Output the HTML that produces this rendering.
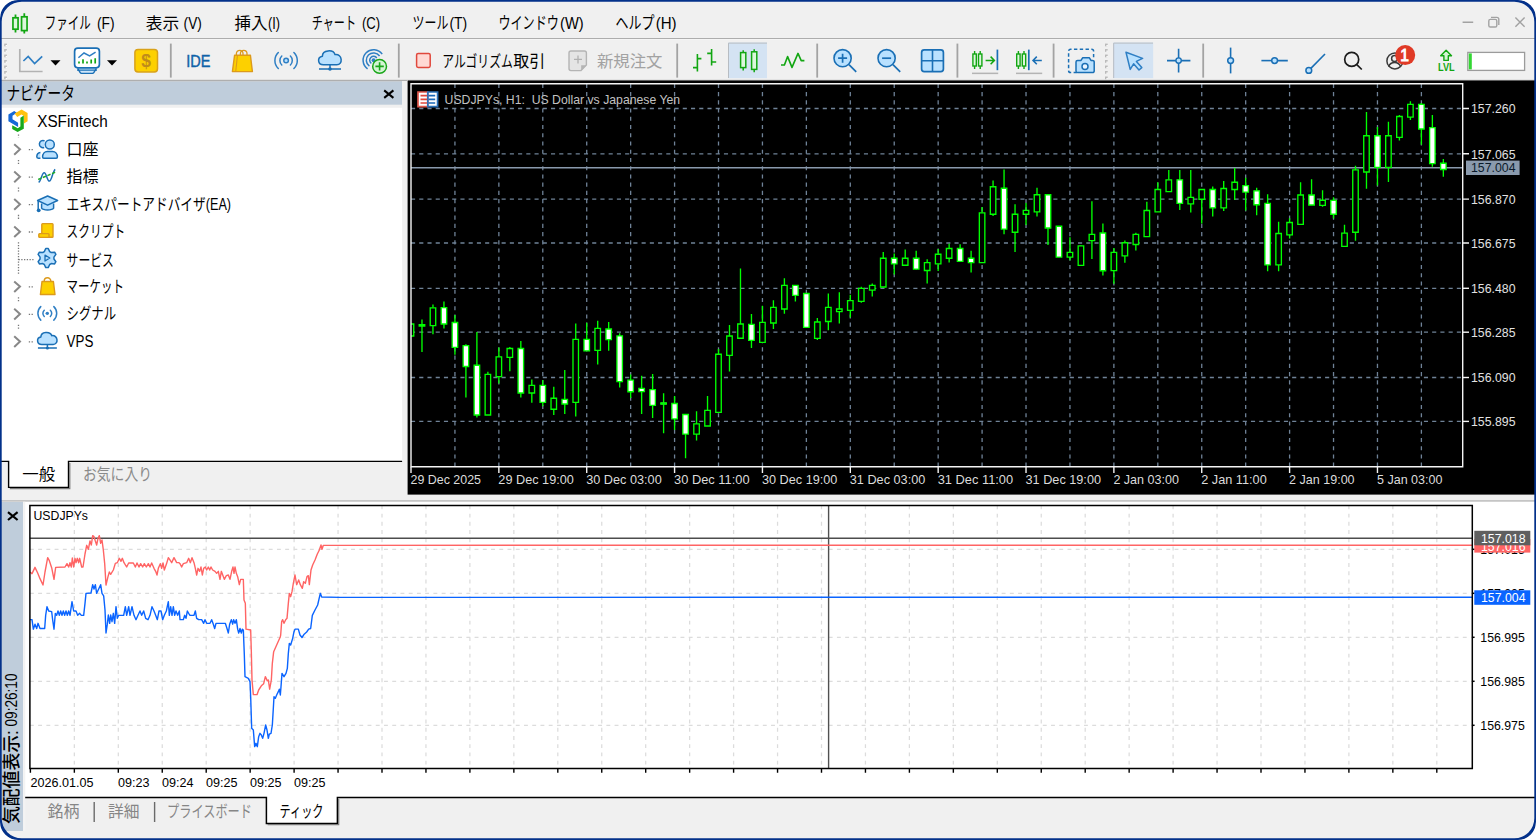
<!DOCTYPE html><html lang="ja"><head><meta charset="utf-8"><title>MetaTrader 5</title><style>

html,body{margin:0;padding:0;background:#fff}
body{width:1536px;height:840px;overflow:hidden;position:relative;font-family:"Liberation Sans","Noto Sans CJK JP",sans-serif}
#app{position:absolute;left:0;top:0;width:1536px;height:840px;border-radius:18px;overflow:hidden;background:#f0f0f0}
.panel{position:absolute;overflow:hidden}
svg text{font-family:"Liberation Sans","Noto Sans CJK JP",sans-serif;white-space:pre}
svg .lat{font-family:"Liberation Sans",sans-serif}

</style></head><body><div id="app">
<div class="panel" id="menubar" style="left:0px;top:0px;width:1536px;height:40px;background:#f0f0f0"><svg class="" width="1536" height="40" viewBox="0 0 1536 40" style="position:absolute;left:0;top:0;overflow:hidden"><rect x="0" y="38.1" width="1536" height="1.1" fill="#a6a6a6"/><rect x="0" y="39.2" width="1536" height="1" fill="#fbfbfb"/><path d="M15.5 14.6v3.2M15.5 29.2v3.2M24.3 13.2v3.6M24.3 30.6v3" stroke="#12a612" stroke-width="1.8" fill="none"/><rect x="12.95" y="17.8" width="5.1" height="11.4" fill="#dcf7dc" stroke="#12a612" stroke-width="1.7"/><rect x="21.55" y="16.8" width="5.5" height="13.8" fill="#dcf7dc" stroke="#12a612" stroke-width="1.7"/><text x="44.8" y="29.2" font-size="17" fill="#000" textLength="46" lengthAdjust="spacingAndGlyphs">ファイル</text><text x="97" y="28.6" font-size="16" fill="#000" textLength="17.6" lengthAdjust="spacingAndGlyphs" class="lat">(F)</text><text x="145.8" y="29.2" font-size="16.4" fill="#000" textLength="33.5" lengthAdjust="spacingAndGlyphs">表示</text><text x="183.6" y="28.6" font-size="16" fill="#000" textLength="18.2" lengthAdjust="spacingAndGlyphs" class="lat">(V)</text><text x="234.4" y="29.2" font-size="16.4" fill="#000" textLength="33" lengthAdjust="spacingAndGlyphs">挿入</text><text x="268" y="28.6" font-size="16" fill="#000" textLength="12" lengthAdjust="spacingAndGlyphs" class="lat">(I)</text><text x="311.8" y="29.2" font-size="17" fill="#000" textLength="44.2" lengthAdjust="spacingAndGlyphs">チャート</text><text x="362" y="28.6" font-size="16" fill="#000" textLength="18.2" lengthAdjust="spacingAndGlyphs" class="lat">(C)</text><text x="412.6" y="29.2" font-size="17" fill="#000" textLength="35.8" lengthAdjust="spacingAndGlyphs">ツール</text><text x="449.5" y="28.6" font-size="16" fill="#000" textLength="17.7" lengthAdjust="spacingAndGlyphs" class="lat">(T)</text><text x="498.4" y="29.2" font-size="17" fill="#000" textLength="60.5" lengthAdjust="spacingAndGlyphs">ウインドウ</text><text x="560" y="28.6" font-size="16" fill="#000" textLength="23.6" lengthAdjust="spacingAndGlyphs" class="lat">(W)</text><text x="615.6" y="29.2" font-size="17" fill="#000" textLength="39" lengthAdjust="spacingAndGlyphs">ヘルプ</text><text x="655.7" y="28.6" font-size="16" fill="#000" textLength="20.9" lengthAdjust="spacingAndGlyphs" class="lat">(H)</text><path d="M1462.6 22.2h10.6" stroke="#a2a2a2" stroke-width="1.5" fill="none"/><rect x="1488.8" y="19.4" width="8" height="7.6" rx="1.6" fill="none" stroke="#a2a2a2" stroke-width="1.4"/><path d="M1491 17.4h5.8a2 2 0 0 1 2 2v5.6" fill="none" stroke="#a2a2a2" stroke-width="1.4"/><path d="M1515.4 17.6l9.2 9.2M1524.6 17.6l-9.2 9.2" stroke="#a2a2a2" stroke-width="1.4" fill="none"/></svg></div>
<div class="panel" id="toolbar" style="left:0px;top:40px;width:1536px;height:41px;background:#f0f0f0"><svg class="" width="1536" height="41" viewBox="0 40 1536 41" style="position:absolute;left:0;top:0;overflow:hidden"><rect x="0" y="79.3" width="1536" height="0.9" fill="#dcdcdc"/><rect x="0" y="80.1" width="1536" height="1" fill="#a8a8a8"/><rect x="4.2" y="43.6" width="2.7" height="2.7" fill="#b9b9b9"/><rect x="5.6" y="45" width="1.4" height="1.4" fill="#fff"/><rect x="4.2" y="49.09" width="2.7" height="2.7" fill="#b9b9b9"/><rect x="5.6" y="50.49" width="1.4" height="1.4" fill="#fff"/><rect x="4.2" y="54.58" width="2.7" height="2.7" fill="#b9b9b9"/><rect x="5.6" y="55.98" width="1.4" height="1.4" fill="#fff"/><rect x="4.2" y="60.07" width="2.7" height="2.7" fill="#b9b9b9"/><rect x="5.6" y="61.47" width="1.4" height="1.4" fill="#fff"/><rect x="4.2" y="65.56" width="2.7" height="2.7" fill="#b9b9b9"/><rect x="5.6" y="66.96" width="1.4" height="1.4" fill="#fff"/><rect x="4.2" y="71.05" width="2.7" height="2.7" fill="#b9b9b9"/><rect x="5.6" y="72.45" width="1.4" height="1.4" fill="#fff"/><rect x="4.2" y="76.54" width="2.7" height="2.7" fill="#b9b9b9"/><rect x="5.6" y="77.94" width="1.4" height="1.4" fill="#fff"/><path d="M19.8 49v22.5h22.8" fill="none" stroke="#b2b2b2" stroke-width="1.7"/><path d="M23.4 61l4.8-4.6 6.4 7.2 7.6-7.2" fill="none" stroke="#2f7fc4" stroke-width="1.7"/><path d="M50.5 60.2h10l-5 5.4z" fill="#000"/><path d="M77.6 68.4l2.6 4.2a1.6 1.6 0 0 0 1.4 .8h10.8a1.6 1.6 0 0 0 1.4-.8l2.6-4.2" fill="#cfe6fa" stroke="#1a6fb5" stroke-width="1.4"/><path d="M77 70.2h20" stroke="#1a6fb5" stroke-width="1.3"/><rect x="74.6" y="48.2" width="24.8" height="19.6" fill="#fff" stroke="#1a6fb5" stroke-width="1.7" rx="3.2"/><path d="M78.4 57.8l5.6-4.8 5.6 3 6-3.8" fill="none" stroke="#2f7fc4" stroke-width="1.5"/><path d="M79 63.6v-2.2M83 63.6v-4.4M87 63.6v-2.2M91.2 63.6v-4M95.2 63.6v-5.4" stroke="#12a612" stroke-width="1.7" fill="none"/><path d="M107 60.2h10l-5 5.4z" fill="#000"/><rect x="134.9" y="49.4" width="22.6" height="22.6" fill="#fdd000" stroke="#d9a21a" stroke-width="1.5" rx="3.2"/><text x="146.2" y="66.6" font-size="17.5" fill="#c08c1a" text-anchor="middle" class="lat" font-weight="bold">$</text><rect x="169.9" y="43.6" width="1.8" height="34" fill="#a3a3a3"/><text x="186.2" y="66.8" font-size="17.2" fill="#0f62a8" textLength="24.2" lengthAdjust="spacingAndGlyphs" class="lat" stroke="#0f62a8" stroke-width="0.45">IDE</text><path d="M236.4 56v-2.4a3.3 3.3 0 0 1 6.6 0v2.4M240.4 56v-2.4a3.3 3.3 0 0 1 6.6 0v2.4" fill="none" stroke="#dc9a1c" stroke-width="1.3"/><path d="M234.6 55.2h15.8l2 16.4h-20z" fill="#fdd000" stroke="#dc9a1c" stroke-width="1.4" stroke-linejoin="round"/><path d="M235.8 71l1.6-15.4" stroke="#dc9a1c" stroke-width="1.1" fill="none"/><path d="M290.41 56.04A6.2 6.2 0 0 1 290.41 64.96M281.79 56.04A6.2 6.2 0 0 0 281.79 64.96" fill="none" stroke="#2f7fc4" stroke-width="1.5" stroke-linecap="round"/><path d="M293.88 52.44A11.2 11.2 0 0 1 293.88 68.56M278.32 52.44A11.2 11.2 0 0 0 278.32 68.56" fill="none" stroke="#2f7fc4" stroke-width="1.5" stroke-linecap="round"/><circle cx="286.1" cy="60.5" r="2.3" fill="#b9e1ff" stroke="#2f7fc4" stroke-width="1.5"/><path d="M323.4 64.8C317.6 64.8 316.8 57.2 322.4 56.2C322.4 49.6 333.4 49.2 335 54.6C342.6 53.6 343.2 64.8 336.8 64.8z" fill="#b9e1ff" stroke="#1a6fb5" stroke-width="1.5" stroke-linejoin="round"/><path d="M330 64.8v3.4M319 69h22" stroke="#1a6fb5" stroke-width="1.5" fill="none"/><circle cx="330" cy="69" r="1.8" fill="#1a6fb5"/><path d="M376.79 57.96A3.9 3.9 0 1 0 371.36 63.39" fill="none" stroke="#2f7fc4" stroke-width="1.5"/><path d="M379.58 56.01A7.3 7.3 0 1 0 369.41 66.18" fill="none" stroke="#2f7fc4" stroke-width="1.5"/><path d="M382.2 54.18A10.5 10.5 0 1 0 367.58 68.8" fill="none" stroke="#2f7fc4" stroke-width="1.5"/><circle cx="373.6" cy="60.2" r="2" fill="#2f7fc4"/><circle cx="379.6" cy="66.4" r="6.9" fill="#d4f4d4" stroke="#1aa61a" stroke-width="1.5"/><path d="M375.4 66.4h8.4M379.6 62.2v8.4" stroke="#1aa61a" stroke-width="1.6" fill="none"/><rect x="397.9" y="43.6" width="1.8" height="34" fill="#a3a3a3"/><rect x="416.6" y="53.4" width="13.6" height="14" fill="#ffd9d4" stroke="#e0483c" stroke-width="1.5" rx="1.6"/><text x="442.3" y="66.6" font-size="16.4" fill="#000" textLength="70.5" lengthAdjust="spacingAndGlyphs">アルゴリズム</text><text x="513.2" y="66.6" font-size="16.4" fill="#000" textLength="32" lengthAdjust="spacingAndGlyphs">取引</text><path d="M571 51h13.4a2 2 0 0 1 2 2v12l-5.4 5.6h-10a2 2 0 0 1 -2-2v-15.6a2 2 0 0 1 2-2z" fill="#e4e4e4" stroke="#b4b4b4" stroke-width="1.4"/><path d="M586.2 65.2h-5v5.2z" fill="#b4b4b4"/><path d="M574 59.4h8M578 55.4v8" stroke="#b0b0b0" stroke-width="1.3" fill="none"/><text x="597" y="66.6" font-size="16.4" fill="#a2a2a2" textLength="65.5" lengthAdjust="spacingAndGlyphs">新規注文</text><rect x="676.3" y="43.6" width="1.8" height="34" fill="#a3a3a3"/><path d="M697.4 54v17.6M693 67.6h4.4M697.4 58.6h4M711.6 49v16.4M707.2 53.4h4.4M711.6 62h4.6" fill="none" stroke="#12a612" stroke-width="1.6"/><rect x="728" y="42.6" width="39" height="35.6" fill="#d4e3f3"/><path d="M728.5 78V43.1H767" fill="none" stroke="#b7bcc2" stroke-width="1"/><path d="M743.2 50.2V52.6M743.2 67.6V70.6" stroke="#12a612" stroke-width="1.5" fill="none"/><rect x="740.6" y="52.6" width="5.2" height="15" fill="#dcf7dc" stroke="#12a612" stroke-width="1.5"/><path d="M754.2 49.2V51.8M754.2 69.4V72.2" stroke="#12a612" stroke-width="1.5" fill="none"/><rect x="751.6" y="51.8" width="5.2" height="17.6" fill="#dcf7dc" stroke="#12a612" stroke-width="1.5"/><path d="M781 65h3.4l3.2-8.4 4.4 10.8 6-14 3.2 7.2h3.2" fill="none" stroke="#12a612" stroke-width="1.6" stroke-linejoin="round"/><rect x="816.3" y="43.6" width="1.8" height="34" fill="#a3a3a3"/><circle cx="842.6" cy="58.2" r="8.6" fill="#b9e1ff" stroke="#1a6fb5" stroke-width="1.6"/><path d="M849 64.6l7.2 7.2" stroke="#1a6fb5" stroke-width="1.7" fill="none"/><path d="M838.1 58.2h9M842.6 53.7v9" stroke="#1a6fb5" stroke-width="1.7" fill="none"/><circle cx="886.6" cy="58.2" r="8.6" fill="#b9e1ff" stroke="#1a6fb5" stroke-width="1.6"/><path d="M893 64.6l7.2 7.2" stroke="#1a6fb5" stroke-width="1.7" fill="none"/><path d="M882.1 58.2h9" stroke="#1a6fb5" stroke-width="1.7" fill="none"/><rect x="921.6" y="49.8" width="21.8" height="21.8" fill="#b9e1ff" stroke="#1a6fb5" stroke-width="1.7" rx="2.6"/><path d="M932.5 49.8v21.8M921.6 60.7h21.8" stroke="#1a6fb5" stroke-width="1.6" fill="none"/><rect x="956.5" y="43.6" width="1.8" height="34" fill="#a3a3a3"/><path d="M974.6 51V54M974.6 66V69" stroke="#12a612" stroke-width="1.4" fill="none"/><rect x="972.9" y="54" width="3.4" height="12" fill="#dcf7dc" stroke="#12a612" stroke-width="1.4"/><path d="M980.2 51V54M980.2 66V69" stroke="#12a612" stroke-width="1.4" fill="none"/><rect x="978.5" y="54" width="3.4" height="12" fill="#dcf7dc" stroke="#12a612" stroke-width="1.4"/><path d="M985.6 60.4h8.6M990.6 56.6l3.8 3.8-3.8 3.8" fill="none" stroke="#12a612" stroke-width="1.5"/><path d="M997.4 49.6v20.6" stroke="#1a6fb5" stroke-width="1.7"/><rect x="972" y="72.6" width="26.2" height="1.5" fill="#b4b4b4"/><path d="M1018.4 51V54M1018.4 66V69" stroke="#12a612" stroke-width="1.4" fill="none"/><rect x="1016.7" y="54" width="3.4" height="12" fill="#dcf7dc" stroke="#12a612" stroke-width="1.4"/><path d="M1024 51V54M1024 66V69" stroke="#12a612" stroke-width="1.4" fill="none"/><rect x="1022.3" y="54" width="3.4" height="12" fill="#dcf7dc" stroke="#12a612" stroke-width="1.4"/><path d="M1028.8 49.6v20.6" stroke="#1a6fb5" stroke-width="1.7"/><path d="M1033 60.4h8.8M1036.8 56.6l-3.8 3.8 3.8 3.8" fill="none" stroke="#1a6fb5" stroke-width="1.5"/><rect x="1016" y="72.6" width="26.2" height="1.5" fill="#b4b4b4"/><rect x="1052.7" y="43.6" width="1.8" height="34" fill="#a3a3a3"/><path d="M1077 72.6h-6.4a2 2 0 0 1 -2-2v-19.4a2 2 0 0 1 2-2h21a2 2 0 0 1 2 2v6" fill="none" stroke="#1a6fb5" stroke-width="1.5" stroke-dasharray="3.4 2.4"/><path d="M1077.6 60.4h3.4l1.6-2.6h6.8l1.6 2.6h1.6a1.6 1.6 0 0 1 1.6 1.6v9a1.6 1.6 0 0 1 -1.6 1.6h-15a1.6 1.6 0 0 1 -1.6-1.6v-9a1.6 1.6 0 0 1 1.6-1.6z" fill="#b9e1ff" stroke="#1a6fb5" stroke-width="1.5" stroke-linejoin="round"/><circle cx="1085" cy="66.4" r="3" fill="#eaf5ff" stroke="#1a6fb5" stroke-width="1.5"/><rect x="1105" y="43.6" width="2.7" height="2.7" fill="#b9b9b9"/><rect x="1106.4" y="45" width="1.4" height="1.4" fill="#fff"/><rect x="1105" y="49.09" width="2.7" height="2.7" fill="#b9b9b9"/><rect x="1106.4" y="50.49" width="1.4" height="1.4" fill="#fff"/><rect x="1105" y="54.58" width="2.7" height="2.7" fill="#b9b9b9"/><rect x="1106.4" y="55.98" width="1.4" height="1.4" fill="#fff"/><rect x="1105" y="60.07" width="2.7" height="2.7" fill="#b9b9b9"/><rect x="1106.4" y="61.47" width="1.4" height="1.4" fill="#fff"/><rect x="1105" y="65.56" width="2.7" height="2.7" fill="#b9b9b9"/><rect x="1106.4" y="66.96" width="1.4" height="1.4" fill="#fff"/><rect x="1105" y="71.05" width="2.7" height="2.7" fill="#b9b9b9"/><rect x="1106.4" y="72.45" width="1.4" height="1.4" fill="#fff"/><rect x="1105" y="76.54" width="2.7" height="2.7" fill="#b9b9b9"/><rect x="1106.4" y="77.94" width="1.4" height="1.4" fill="#fff"/><rect x="1113.2" y="42.6" width="40" height="35.6" fill="#d4e3f3"/><path d="M1113.7 78V43.1H1153" fill="none" stroke="#b7bcc2" stroke-width="1"/><path d="M1126 52.2l16.6 6.2-6.2 3 5.4 6.2-2.8 2.4-5.4-6.2-3.4 5.6z" fill="#b9e1ff" stroke="#2f7fc4" stroke-width="1.5" stroke-linejoin="round"/><path d="M1167 60.6h23.4M1178.6 48.8v23.6" stroke="#1a6fb5" stroke-width="1.6" fill="none"/><circle cx="1178.6" cy="60.6" r="2.7" fill="#b9e1ff" stroke="#1a6fb5" stroke-width="1.4"/><rect x="1202.3" y="43.6" width="1.8" height="34" fill="#a3a3a3"/><path d="M1230.6 47.6v25.8" stroke="#1a6fb5" stroke-width="1.6"/><circle cx="1230.6" cy="60.6" r="2.9" fill="#b9e1ff" stroke="#1a6fb5" stroke-width="1.5"/><path d="M1261.4 60.6h26.4" stroke="#1a6fb5" stroke-width="1.6"/><circle cx="1274.6" cy="60.6" r="2.9" fill="#b9e1ff" stroke="#1a6fb5" stroke-width="1.5"/><path d="M1310.6 68.6l14.4-14.6" stroke="#1a6fb5" stroke-width="1.6"/><circle cx="1308.8" cy="70.4" r="2.9" fill="#b9e1ff" stroke="#1a6fb5" stroke-width="1.5"/><circle cx="1351.7" cy="59.4" r="7" fill="none" stroke="#1c1c1c" stroke-width="1.7"/><path d="M1356.8 64.6l5 4.9" stroke="#1c1c1c" stroke-width="1.7" fill="none"/><circle cx="1394.9" cy="60.9" r="8" fill="none" stroke="#3a3a3a" stroke-width="1.5"/><circle cx="1394.6" cy="58.4" r="3" fill="none" stroke="#3a3a3a" stroke-width="1.5"/><path d="M1388.6 66.6c1.2-3 3.4-4 6-4s4.8 1 6 4" fill="none" stroke="#3a3a3a" stroke-width="1.5"/><circle cx="1405.2" cy="55.1" r="10" fill="#e03a26"/><text x="1404.6" y="60.7" font-size="15.6" fill="#fff" text-anchor="middle" class="lat" stroke="#fff" stroke-width="0.9">1</text><path d="M1446.1 50.2l5.4 5.6h-3.2v4.6h-4.4v-4.6h-3.2z" fill="#d4f4d4" stroke="#12a612" stroke-width="1.4" stroke-linejoin="round"/><text x="1438" y="70.9" font-size="11" fill="#12a612" textLength="16.7" lengthAdjust="spacingAndGlyphs" class="lat" font-weight="bold">LVL</text><rect x="1467.8" y="52.4" width="56.8" height="18" fill="#fff" stroke="#9b9b9b" stroke-width="1.3"/><rect x="1468.8" y="53.4" width="3" height="16" fill="#33d633"/></svg></div>
<div class="panel" id="navigator" style="left:0px;top:81px;width:407px;height:420px;background:#f0f0f0"><svg class="" width="407" height="420" viewBox="0 81 407 420" style="position:absolute;left:0;top:0;overflow:hidden"><rect x="0" y="80.6" width="402" height="1" fill="#b5b5b5"/><rect x="0" y="81.5" width="402" height="23.2" fill="#bfcddb"/><text x="6.4" y="99.6" font-size="18.4" fill="#000" textLength="68.5" lengthAdjust="spacingAndGlyphs">ナビゲータ</text><path d="M384.2 90.4l9.2 7.5M393.4 90.4l-9.2 7.5" stroke="#000" stroke-width="2" fill="none"/><rect x="0" y="107.8" width="402.1" height="353.6" fill="#fff"/><path d="M18.5 134.5V137.5" stroke="#777" stroke-width="1.3" stroke-dasharray="1.3 1.45" fill="none"/><path d="M18.5 159.95V164.95" stroke="#777" stroke-width="1.3" stroke-dasharray="1.3 1.45" fill="none"/><path d="M18.5 187.4V192.4" stroke="#777" stroke-width="1.3" stroke-dasharray="1.3 1.45" fill="none"/><path d="M18.5 214.85V219.85" stroke="#777" stroke-width="1.3" stroke-dasharray="1.3 1.45" fill="none"/><path d="M18.5 242.3V273.75" stroke="#777" stroke-width="1.3" stroke-dasharray="1.3 1.45" fill="none"/><path d="M18.5 297.2V302.2" stroke="#777" stroke-width="1.3" stroke-dasharray="1.3 1.45" fill="none"/><path d="M18.5 324.65V329.65" stroke="#777" stroke-width="1.3" stroke-dasharray="1.3 1.45" fill="none"/><path d="M14.2 144.15l5.8 5.2l-5.8 5.4" fill="none" stroke="#888" stroke-width="2"/><path d="M28.8 149.65H33" stroke="#777" stroke-width="1.3" stroke-dasharray="1.3 1.45" fill="none"/><path d="M14.2 171.6l5.8 5.2l-5.8 5.4" fill="none" stroke="#888" stroke-width="2"/><path d="M28.8 177.1H33" stroke="#777" stroke-width="1.3" stroke-dasharray="1.3 1.45" fill="none"/><path d="M14.2 199.05l5.8 5.2l-5.8 5.4" fill="none" stroke="#888" stroke-width="2"/><path d="M28.8 204.55H33" stroke="#777" stroke-width="1.3" stroke-dasharray="1.3 1.45" fill="none"/><path d="M14.2 226.5l5.8 5.2l-5.8 5.4" fill="none" stroke="#888" stroke-width="2"/><path d="M28.8 232H33" stroke="#777" stroke-width="1.3" stroke-dasharray="1.3 1.45" fill="none"/><path d="M14.2 281.4l5.8 5.2l-5.8 5.4" fill="none" stroke="#888" stroke-width="2"/><path d="M28.8 286.9H33" stroke="#777" stroke-width="1.3" stroke-dasharray="1.3 1.45" fill="none"/><path d="M14.2 308.85l5.8 5.2l-5.8 5.4" fill="none" stroke="#888" stroke-width="2"/><path d="M28.8 314.35H33" stroke="#777" stroke-width="1.3" stroke-dasharray="1.3 1.45" fill="none"/><path d="M14.2 336.3l5.8 5.2l-5.8 5.4" fill="none" stroke="#888" stroke-width="2"/><path d="M28.8 341.8H33" stroke="#777" stroke-width="1.3" stroke-dasharray="1.3 1.45" fill="none"/><path d="M18.5 259.55H33.5" stroke="#777" stroke-width="1.3" stroke-dasharray="1.3 1.45" fill="none"/><path d="M8.4 114.6l5.8-3.7 2.6 1.8-4.3 3v3.6l5.6 3.4v4.4l-9.7-5.8z" fill="#1668d6"/><path d="M14.6 113.4l7-3.8 6 3.4v8.2l-3.6 2.2v-7.4l-2.6-1.6-4.2 2.6z" fill="#ffc20e"/><path d="M12.2 125.3l5.6 3 2.6-1.8v-8.8l3.4-2.2v13.2l-6.2 3.4-5.4-3z" fill="#18a81c"/><text x="37.2" y="127" font-size="16" fill="#000" textLength="70.5" lengthAdjust="spacingAndGlyphs" class="lat">XSFintech</text><path d="M44.6 140.85a3.6 3.6 0 1 0 -0.4 6.6M40.4 158.25h-2.2a1.4 1.4 0 0 1 -1.4-1.4c0-2.6 1.4-4.2 3.6-4.4" fill="#b9e1ff" stroke="#1a6fb5" stroke-width="1.5"/><circle cx="49.8" cy="144.45" r="4.5" fill="#b9e1ff" stroke="#1a6fb5" stroke-width="1.5"/><path d="M42.6 157.05c0-3.6 2.2-5.6 4.6-5.6h5.4c2.6 0 4.8 2 4.8 5.6a1.2 1.2 0 0 1 -1.2 1.2h-12.4a1.2 1.2 0 0 1 -1.2-1.2z" fill="#b9e1ff" stroke="#1a6fb5" stroke-width="1.5"/><text x="66.6" y="154.75" font-size="16.4" fill="#000" textLength="32" lengthAdjust="spacingAndGlyphs">口座</text><path d="M38.6 182.3c2.4-1 3.2-9.6 5.6-9.6s2.8 8.4 5.2 8.4 3.2-9.8 5.8-11.8" fill="none" stroke="#1a6fb5" stroke-width="1.5"/><path d="M38.2 179.5L55.6 172.1" fill="none" stroke="#1eaa28" stroke-width="1.5" stroke-dasharray="3.4 1.6"/><text x="66.6" y="182.2" font-size="16.4" fill="#000" textLength="32" lengthAdjust="spacingAndGlyphs">指標</text><path d="M41.6 203.55v4.6c1.6 2.4 10.4 2.4 12 0v-4.6" fill="#b9e1ff" stroke="#1a6fb5" stroke-width="1.5"/><path d="M37.6 200.55l10-4.5 10 4.5-10 4.6z" fill="#b9e1ff" stroke="#1a6fb5" stroke-width="1.5" stroke-linejoin="round"/><path d="M38.2 200.75v8.2" stroke="#1a6fb5" stroke-width="1.5"/><circle cx="38.7" cy="210.35" r="1.9" fill="#1a6fb5"/><text x="66.6" y="209.65" font-size="16.4" fill="#000" textLength="164.5" lengthAdjust="spacingAndGlyphs">エキスパートアドバイザ(EA)</text><rect x="41.8" y="223.6" width="11.2" height="13.6" fill="#fdd000" stroke="#dc9a1c" stroke-width="1.4" rx="0.8"/><rect x="38.8" y="233.6" width="10.2" height="3.8" fill="#fdd000" stroke="#dc9a1c" stroke-width="1.4" rx="0.8"/><text x="66.6" y="237.1" font-size="16.4" fill="#000" textLength="58.5" lengthAdjust="spacingAndGlyphs">スクリプト</text><path d="M45.75 248.53L48.25 248.53L49.68 251.58L51.26 252.5L54.62 252.21L55.87 254.38L53.94 257.14L53.94 258.96L55.87 261.72L54.62 263.89L51.26 263.6L49.68 264.52L48.25 267.57L45.75 267.57L44.32 264.52L42.74 263.6L39.38 263.89L38.13 261.72L40.06 258.96L40.06 257.14L38.13 254.38L39.38 252.21L42.74 252.5L44.32 251.58z" fill="#b9e1ff" stroke="#1a6fb5" stroke-width="1.5" stroke-linejoin="round"/><path d="M45 255.05l4.8 3-4.8 3z" fill="#b9e1ff" stroke="#1a6fb5" stroke-width="1.3" stroke-linejoin="round"/><text x="66.6" y="265.85" font-size="16.4" fill="#000" textLength="47.3" lengthAdjust="spacingAndGlyphs">サービス</text><path d="M44.2 283.7v-2.6a3.3 3.3 0 0 1 6.6 0v2.6" fill="none" stroke="#dc9a1c" stroke-width="1.4"/><path d="M42 281.5h11.4l1.6 13h-14.6z" fill="#fdd000" stroke="#dc9a1c" stroke-width="1.4" stroke-linejoin="round"/><text x="66.6" y="292" font-size="16.4" fill="#000" textLength="57.3" lengthAdjust="spacingAndGlyphs">マーケット</text><path d="M50.36 310.18A4.4 4.4 0 0 1 50.36 316.52M44.24 310.18A4.4 4.4 0 0 0 44.24 316.52" fill="none" stroke="#2f7fc4" stroke-width="1.5" stroke-linecap="round"/><path d="M53.83 306.59A9.4 9.4 0 0 1 53.83 320.11M40.77 306.59A9.4 9.4 0 0 0 40.77 320.11" fill="none" stroke="#2f7fc4" stroke-width="1.5" stroke-linecap="round"/><circle cx="47.3" cy="313.35" r="1.7" fill="#2f7fc4"/><text x="66.6" y="319.45" font-size="16.4" fill="#000" textLength="49.5" lengthAdjust="spacingAndGlyphs">シグナル</text><path d="M41.72 344.42C36.74 344.42 36.05 337.88 40.86 337.02C40.86 331.35 50.32 331 51.7 335.65C58.24 334.79 58.75 344.42 53.25 344.42z" fill="#b9e1ff" stroke="#1a6fb5" stroke-width="1.5" stroke-linejoin="round"/><path d="M47.4 344.42v2.92M37.94 348.03h18.92" stroke="#1a6fb5" stroke-width="1.5" fill="none"/><circle cx="47.4" cy="348.03" r="1.55" fill="#1a6fb5"/><text x="66.6" y="346.8" font-size="16" fill="#000" textLength="26.8" lengthAdjust="spacingAndGlyphs" class="lat">VPS</text><rect x="8.6" y="461" width="60" height="26.4" fill="#fff"/><path d="M0 461.4H8.6V487.4H68.5V461.4H402.1" fill="none" stroke="#000" stroke-width="1.4"/><path d="M9.8 488.7H69.8V463" fill="none" stroke="#7a7a7a" stroke-width="1.2"/><text x="22.3" y="480.3" font-size="16.4" fill="#000" textLength="33" lengthAdjust="spacingAndGlyphs">一般</text><text x="83" y="480.3" font-size="16.4" fill="#8a8a8a" textLength="69" lengthAdjust="spacingAndGlyphs">お気に入り</text></svg></div>
<div class="panel" id="chart" style="left:407px;top:80px;width:1129px;height:415px;background:#f0f0f0"><svg class="" width="1129" height="415" viewBox="407 80 1129 415" style="position:absolute;left:0;top:0;overflow:hidden"><rect x="407.6" y="80.4" width="1128.4" height="414.2" fill="#000"/><path d="M454.93 83.8V466.8M498.86 83.8V466.8M542.79 83.8V466.8M586.72 83.8V466.8M630.65 83.8V466.8M674.58 83.8V466.8M718.51 83.8V466.8M762.44 83.8V466.8M806.37 83.8V466.8M850.3 83.8V466.8M894.23 83.8V466.8M938.16 83.8V466.8M982.09 83.8V466.8M1026.02 83.8V466.8M1069.95 83.8V466.8M1113.88 83.8V466.8M1157.81 83.8V466.8M1201.74 83.8V466.8M1245.67 83.8V466.8M1289.6 83.8V466.8M1333.53 83.8V466.8M1377.46 83.8V466.8M1421.39 83.8V466.8M411 108.5H1462.7M411 153.8H1462.7M411 199.1H1462.7M411 243H1462.7M411 288.3H1462.7M411 332.2H1462.7M411 377.5H1462.7M411 421.4H1462.7" fill="none" stroke="#6f8297" stroke-width="1.3" stroke-dasharray="4.1175 4.1175"/><line x1="411" y1="167.7" x2="1462.7" y2="167.7" stroke="#8a9aad" stroke-width="1.4"/><clipPath id="cc"><rect x="411" y="83.8" width="1051.7" height="383"/></clipPath><g clip-path="url(#cc)" stroke="#00ff00" stroke-width="1.35" fill="none"><path d="M421.98 319.4V324.6M421.98 326V352M432.96 304.5V307.8M432.96 325.6V334.3M443.95 301.6V307.6M443.95 324V328.6M454.93 315V322.5M454.93 347.4V354.7M465.91 344.3V345.6M465.91 366.5V397.4M476.89 332V365.2M476.89 415V417.6M487.88 371.8V374.4M498.86 347.4V356.8M498.86 376.7V383.5M509.84 346.9V348.5M509.84 357.4V371.2M520.83 341.1V348.5M520.83 393V397.4M531.81 379.6V385.4M531.81 393V402.7M542.79 380.1V385.4M542.79 402.4V406.3M553.77 386.7V398.2M553.77 409.2V415M564.75 370V399.3M564.75 404V414M575.74 323.6V339.3M575.74 402.4V416.5M586.72 322.8V339.3M597.7 320.7V328.3M597.7 350.3V364.4M608.68 322V329M608.68 339.6V350.8M619.67 333.3V335.9M619.67 381.7V387.5M630.65 374.4V380.1M630.65 391.7V398M641.63 375.7V388.3M641.63 391.7V414M652.62 374.1V389.6M652.62 405.3V418.1M663.6 393.2V402.8M663.6 404.2V433.3M674.58 396.1V403.5M674.58 418.9V429.9M685.56 434.1V458.2M696.55 411.3V423.9M696.55 434.1V440.4M707.53 396.1V410.3M718.51 349V354.2M729.49 325V336M729.49 355.4V371.4M740.48 268.6V324M751.46 314V324.3M751.46 340.4V348M762.44 305.7V322.3M773.42 300.2V307.4M773.42 323V328.9M784.4 278.3V285.4M784.4 309V313.7M795.39 295.3V301.4M817.35 318.1V322M817.35 338.3V339.9M828.34 293.5V307.4M828.34 321.5V330.2M839.32 292.2V309M839.32 311.6V323.4M850.3 294.8V300.6M850.3 310.3V317.6M861.28 286.7V288.3M861.28 301.4V302.7M872.26 283.6V285.4M872.26 290.1V296.6M883.25 252.1V258.2M883.25 287V287.5M894.23 253.4V258.2M894.23 263.9V274.4M905.21 249.5V258.2M916.19 250.8V258.2M916.19 269.1V269.7M927.18 259.2V262.6M927.18 270.5V283.6M938.16 249V254.2M938.16 263.9V271M949.14 243.7V248.5M949.14 258.2V262.6M960.12 244.3V248.5M971.11 250.8V258.2M971.11 262.6V272.6M982.09 207.1V212.8M982.09 262.6V263.1M993.07 180.6V186.7M993.07 214.2V216M1004.05 169.6V188.2M1004.05 229.1V234.3M1015.04 204.2V214.2M1015.04 232.2V252.1M1026.02 203.1V210.4M1026.02 214.3V225M1037 187.7V194.7M1037 211.8V216.5M1047.99 228V245M1069.95 237.2V252.4M1069.95 257.1V260.2M1080.93 245V245.8M1091.91 201.3V234.3M1091.91 240.6V258.9M1102.9 223.6V233M1102.9 270.7V275.4M1113.88 247.9V252.4M1113.88 270.7V283.8M1124.86 240.6V242.7M1124.86 255.8V262.8M1135.85 232.7V234.3M1135.85 244.5V250.5M1146.83 201.8V210.5M1157.81 182.2V189.5M1168.79 169.9V179.8M1179.78 169.9V179.8M1179.78 203.4V209.9M1190.76 169.9V197.4M1190.76 203.9V212.6M1201.74 199.2V223.6M1212.72 186.4V189.5M1212.72 207.8V216.5M1223.7 181.1V188.5M1223.7 207.8V211M1234.69 168V182.2M1234.69 189.5V200M1245.67 177.7V185.6M1245.67 192.1V210.5M1256.65 187.7V190.8M1256.65 204.7V215.2M1267.63 194.2V203.4M1267.63 264.9V271.2M1278.62 221.7V233.5M1278.62 264.9V271.2M1289.6 218.3V222.5M1289.6 234.8V238.5M1300.58 182.2V195M1311.57 179.2V195M1322.55 190.2V200.2M1322.55 205.4V206.8M1333.53 197.2V200.4M1333.53 214.3V218.6M1344.51 224.8V233.1M1355.49 165.7V169.9M1355.49 232.3V240.7M1366.48 111.9V135.7M1366.48 172V188.7M1377.46 126.9V135.7M1377.46 167.4V185.6M1388.44 121.7V135.7M1388.44 167.4V182M1399.42 115V116.5M1399.42 137.4V140.6M1410.41 101.2V104.3M1410.41 117.1V120M1421.39 102.9V104.3M1421.39 129V144.7M1432.37 115V127.6M1432.37 163.6V166.7M1443.36 159V163.2M1443.36 169.5V176.8"/><path d="M408.25 324h5.5v12h-5.5zM430.21 307.8h5.5v17.8h-5.5zM485.13 374.4h5.5v40.6h-5.5zM496.11 356.8h5.5v19.9h-5.5zM507.09 348.5h5.5v8.9h-5.5zM529.06 385.4h5.5v7.6h-5.5zM551.02 398.2h5.5v11h-5.5zM572.99 339.3h5.5v63.1h-5.5zM594.95 328.3h5.5v22h-5.5zM693.8 423.9h5.5v10.2h-5.5zM704.78 410.3h5.5v15.7h-5.5zM715.76 354.2h5.5v58.2h-5.5zM726.74 336h5.5v19.4h-5.5zM737.73 324h5.5v14.2h-5.5zM759.69 322.3h5.5v20.1h-5.5zM770.67 307.4h5.5v15.6h-5.5zM781.65 285.4h5.5v23.6h-5.5zM814.6 322h5.5v16.3h-5.5zM825.59 307.4h5.5v14.1h-5.5zM836.57 309h5.5v2.6h-5.5zM847.55 300.6h5.5v9.7h-5.5zM858.53 288.3h5.5v13.1h-5.5zM869.51 285.4h5.5v4.7h-5.5zM880.5 258.2h5.5v28.8h-5.5zM902.46 258.2h5.5v7h-5.5zM924.43 262.6h5.5v7.9h-5.5zM935.41 254.2h5.5v9.7h-5.5zM946.39 248.5h5.5v9.7h-5.5zM979.34 212.8h5.5v49.8h-5.5zM990.32 186.7h5.5v27.5h-5.5zM1012.29 214.2h5.5v18h-5.5zM1023.27 210.4h5.5v3.9h-5.5zM1034.25 194.7h5.5v17.1h-5.5zM1067.2 252.4h5.5v4.7h-5.5zM1078.18 245.8h5.5v19.6h-5.5zM1089.16 234.3h5.5v6.3h-5.5zM1111.13 252.4h5.5v18.3h-5.5zM1122.11 242.7h5.5v13.1h-5.5zM1133.1 234.3h5.5v10.2h-5.5zM1144.08 210.5h5.5v26.1h-5.5zM1155.06 189.5h5.5v22.3h-5.5zM1166.04 179.8h5.5v11.8h-5.5zM1188.01 197.4h5.5v6.5h-5.5zM1198.99 189.5h5.5v9.7h-5.5zM1220.95 188.5h5.5v19.3h-5.5zM1231.94 182.2h5.5v7.3h-5.5zM1275.87 233.5h5.5v31.4h-5.5zM1286.85 222.5h5.5v12.3h-5.5zM1297.83 195h5.5v29.3h-5.5zM1319.8 200.2h5.5v5.2h-5.5zM1341.76 233.1h5.5v13.2h-5.5zM1352.74 169.9h5.5v62.4h-5.5zM1363.73 135.7h5.5v36.3h-5.5zM1385.69 135.7h5.5v31.7h-5.5zM1396.67 116.5h5.5v20.9h-5.5zM1407.66 104.3h5.5v12.8h-5.5z" fill="#000"/><path d="M419.23 324.6h5.5v1.4h-5.5zM441.2 307.6h5.5v16.4h-5.5zM452.18 322.5h5.5v24.9h-5.5zM463.16 345.6h5.5v20.9h-5.5zM474.14 365.2h5.5v49.8h-5.5zM518.08 348.5h5.5v44.5h-5.5zM540.04 385.4h5.5v17h-5.5zM562 399.3h5.5v4.7h-5.5zM583.97 339.3h5.5v11.5h-5.5zM605.93 329h5.5v10.6h-5.5zM616.92 335.9h5.5v45.8h-5.5zM627.9 380.1h5.5v11.6h-5.5zM638.88 388.3h5.5v3.4h-5.5zM649.87 389.6h5.5v15.7h-5.5zM660.85 402.8h5.5v1.4h-5.5zM671.83 403.5h5.5v15.4h-5.5zM682.81 414.5h5.5v19.6h-5.5zM748.71 324.3h5.5v16.1h-5.5zM792.64 285.4h5.5v9.9h-5.5zM803.62 293.5h5.5v33.8h-5.5zM891.48 258.2h5.5v5.7h-5.5zM913.44 258.2h5.5v10.9h-5.5zM957.38 248.5h5.5v12.8h-5.5zM968.36 258.2h5.5v4.4h-5.5zM1001.3 188.2h5.5v40.9h-5.5zM1045.24 194.7h5.5v33.3h-5.5zM1056.22 226.2h5.5v30.9h-5.5zM1100.15 233h5.5v37.7h-5.5zM1177.03 179.8h5.5v23.6h-5.5zM1209.97 189.5h5.5v18.3h-5.5zM1242.92 185.6h5.5v6.5h-5.5zM1253.9 190.8h5.5v13.9h-5.5zM1264.88 203.4h5.5v61.5h-5.5zM1308.82 195h5.5v10h-5.5zM1330.78 200.4h5.5v13.9h-5.5zM1374.71 135.7h5.5v31.7h-5.5zM1418.64 104.3h5.5v24.7h-5.5zM1429.62 127.6h5.5v36h-5.5zM1440.61 163.2h5.5v6.3h-5.5z" fill="#fff"/></g><path d="M411 83.8H1462.7V466.8H411z" fill="none" stroke="#f4f4f4" stroke-width="1.4"/><line x1="1462.7" y1="108.5" x2="1469" y2="108.5" stroke="#f4f4f4" stroke-width="1.4"/><text x="1471" y="113.2" font-size="12.8" fill="#e2e2e2" textLength="44.5" lengthAdjust="spacingAndGlyphs" class="lat">157.260</text><line x1="1462.7" y1="153.8" x2="1469" y2="153.8" stroke="#f4f4f4" stroke-width="1.4"/><text x="1471" y="158.5" font-size="12.8" fill="#e2e2e2" textLength="44.5" lengthAdjust="spacingAndGlyphs" class="lat">157.065</text><line x1="1462.7" y1="199.1" x2="1469" y2="199.1" stroke="#f4f4f4" stroke-width="1.4"/><text x="1471" y="203.8" font-size="12.8" fill="#e2e2e2" textLength="44.5" lengthAdjust="spacingAndGlyphs" class="lat">156.870</text><line x1="1462.7" y1="243" x2="1469" y2="243" stroke="#f4f4f4" stroke-width="1.4"/><text x="1471" y="247.7" font-size="12.8" fill="#e2e2e2" textLength="44.5" lengthAdjust="spacingAndGlyphs" class="lat">156.675</text><line x1="1462.7" y1="288.3" x2="1469" y2="288.3" stroke="#f4f4f4" stroke-width="1.4"/><text x="1471" y="293" font-size="12.8" fill="#e2e2e2" textLength="44.5" lengthAdjust="spacingAndGlyphs" class="lat">156.480</text><line x1="1462.7" y1="332.2" x2="1469" y2="332.2" stroke="#f4f4f4" stroke-width="1.4"/><text x="1471" y="336.9" font-size="12.8" fill="#e2e2e2" textLength="44.5" lengthAdjust="spacingAndGlyphs" class="lat">156.285</text><line x1="1462.7" y1="377.5" x2="1469" y2="377.5" stroke="#f4f4f4" stroke-width="1.4"/><text x="1471" y="382.2" font-size="12.8" fill="#e2e2e2" textLength="44.5" lengthAdjust="spacingAndGlyphs" class="lat">156.090</text><line x1="1462.7" y1="421.4" x2="1469" y2="421.4" stroke="#f4f4f4" stroke-width="1.4"/><text x="1471" y="426.1" font-size="12.8" fill="#e2e2e2" textLength="44.5" lengthAdjust="spacingAndGlyphs" class="lat">155.895</text><rect x="1466" y="160.6" width="53.6" height="14.4" fill="#8a9aad"/><text x="1471" y="172.4" font-size="12.8" fill="#0b1a2b" textLength="44.5" lengthAdjust="spacingAndGlyphs" class="lat">157.004</text><line x1="411" y1="466.8" x2="411" y2="473" stroke="#f4f4f4" stroke-width="1.4"/><text x="410.5" y="483.7" font-size="12.8" fill="#dcdcdc" textLength="70.5" lengthAdjust="spacingAndGlyphs" class="lat">29 Dec 2025</text><line x1="498.86" y1="466.8" x2="498.86" y2="473" stroke="#f4f4f4" stroke-width="1.4"/><text x="498.36" y="483.7" font-size="12.8" fill="#dcdcdc" textLength="75.5" lengthAdjust="spacingAndGlyphs" class="lat">29 Dec 19:00</text><line x1="586.72" y1="466.8" x2="586.72" y2="473" stroke="#f4f4f4" stroke-width="1.4"/><text x="586.22" y="483.7" font-size="12.8" fill="#dcdcdc" textLength="75.5" lengthAdjust="spacingAndGlyphs" class="lat">30 Dec 03:00</text><line x1="674.58" y1="466.8" x2="674.58" y2="473" stroke="#f4f4f4" stroke-width="1.4"/><text x="674.08" y="483.7" font-size="12.8" fill="#dcdcdc" textLength="75.5" lengthAdjust="spacingAndGlyphs" class="lat">30 Dec 11:00</text><line x1="762.44" y1="466.8" x2="762.44" y2="473" stroke="#f4f4f4" stroke-width="1.4"/><text x="761.94" y="483.7" font-size="12.8" fill="#dcdcdc" textLength="75.5" lengthAdjust="spacingAndGlyphs" class="lat">30 Dec 19:00</text><line x1="850.3" y1="466.8" x2="850.3" y2="473" stroke="#f4f4f4" stroke-width="1.4"/><text x="849.8" y="483.7" font-size="12.8" fill="#dcdcdc" textLength="75.5" lengthAdjust="spacingAndGlyphs" class="lat">31 Dec 03:00</text><line x1="938.16" y1="466.8" x2="938.16" y2="473" stroke="#f4f4f4" stroke-width="1.4"/><text x="937.66" y="483.7" font-size="12.8" fill="#dcdcdc" textLength="75.5" lengthAdjust="spacingAndGlyphs" class="lat">31 Dec 11:00</text><line x1="1026.02" y1="466.8" x2="1026.02" y2="473" stroke="#f4f4f4" stroke-width="1.4"/><text x="1025.52" y="483.7" font-size="12.8" fill="#dcdcdc" textLength="75.5" lengthAdjust="spacingAndGlyphs" class="lat">31 Dec 19:00</text><line x1="1113.88" y1="466.8" x2="1113.88" y2="473" stroke="#f4f4f4" stroke-width="1.4"/><text x="1113.38" y="483.7" font-size="12.8" fill="#dcdcdc" textLength="65.5" lengthAdjust="spacingAndGlyphs" class="lat">2 Jan 03:00</text><line x1="1201.74" y1="466.8" x2="1201.74" y2="473" stroke="#f4f4f4" stroke-width="1.4"/><text x="1201.24" y="483.7" font-size="12.8" fill="#dcdcdc" textLength="65.5" lengthAdjust="spacingAndGlyphs" class="lat">2 Jan 11:00</text><line x1="1289.6" y1="466.8" x2="1289.6" y2="473" stroke="#f4f4f4" stroke-width="1.4"/><text x="1289.1" y="483.7" font-size="12.8" fill="#dcdcdc" textLength="65.5" lengthAdjust="spacingAndGlyphs" class="lat">2 Jan 19:00</text><line x1="1377.46" y1="466.8" x2="1377.46" y2="473" stroke="#f4f4f4" stroke-width="1.4"/><text x="1376.96" y="483.7" font-size="12.8" fill="#dcdcdc" textLength="65.5" lengthAdjust="spacingAndGlyphs" class="lat">5 Jan 03:00</text><rect x="418" y="92" width="19.6" height="14.6" fill="#fff"/><path d="M418 92h9.8v14.6h-9.8z" fill="none" stroke="#e0584c" stroke-width="1.7"/><path d="M427.8 92h9.8v14.6h-9.8z" fill="none" stroke="#2a70b8" stroke-width="1.7"/><path d="M420.5 95.6h6.6M420.5 99.3h6.6M420.5 103h6.6" stroke="#e0483c" stroke-width="1.7"/><path d="M428.6 95.6h6.6M428.6 99.3h6.6M428.6 103h6.6" stroke="#1a68b8" stroke-width="1.7"/><text x="444.6" y="104" font-size="12.8" fill="#c2c2c2" textLength="235.5" lengthAdjust="spacingAndGlyphs" class="lat">USDJPYs, H1:  US Dollar vs Japanese Yen</text></svg></div>
<div class="panel" id="ticks" style="left:0px;top:500px;width:1536px;height:340px;background:#f0f0f0"><svg class="" width="1536" height="340" viewBox="0 500 1536 340" style="position:absolute;left:0;top:0;overflow:hidden"><rect x="0" y="500.4" width="1536" height="1.3" fill="#aaaaaa"/><rect x="0" y="501.7" width="1536" height="296" fill="#fff"/><rect x="0" y="502" width="23.1" height="329" fill="#bfcddb"/><rect x="23.1" y="501.7" width="2.2" height="329.3" fill="#f3f3f3"/><path d="M8 512.2l9.6 7.8M17.6 512.2l-9.6 7.8" stroke="#000" stroke-width="2.2" fill="none"/><g transform="translate(18 824) rotate(-90)"><text x="0" y="0" font-size="18" font-weight="500" fill="#000" textLength="94" lengthAdjust="spacingAndGlyphs">気配値表示:</text><text x="97.5" y="-0.6" font-size="16.4" fill="#000" textLength="53" lengthAdjust="spacingAndGlyphs" class="lat">09:26:10</text></g><path d="M74.35 505.4V768.4M118.3 505.4V768.4M162.25 505.4V768.4M206.2 505.4V768.4M250.15 505.4V768.4M294.1 505.4V768.4M338.05 505.4V768.4M382 505.4V768.4M425.95 505.4V768.4M469.9 505.4V768.4M513.85 505.4V768.4M557.8 505.4V768.4M601.75 505.4V768.4M645.7 505.4V768.4M689.65 505.4V768.4M733.6 505.4V768.4M777.55 505.4V768.4M821.5 505.4V768.4M865.45 505.4V768.4M909.4 505.4V768.4M953.35 505.4V768.4M997.3 505.4V768.4M1041.25 505.4V768.4M1085.2 505.4V768.4M1129.15 505.4V768.4M1173.1 505.4V768.4M1217.05 505.4V768.4M1261 505.4V768.4M1304.95 505.4V768.4M1348.9 505.4V768.4M1392.85 505.4V768.4M1436.8 505.4V768.4M29.9 549.3H1472.3M29.9 593.3H1472.3M29.9 637.3H1472.3M29.9 681.3H1472.3M29.9 725.3H1472.3" fill="none" stroke="#dcdcdc" stroke-width="1.25" stroke-dasharray="3.9 4.335"/><line x1="29.9" y1="538.2" x2="1472.3" y2="538.2" stroke="#4c4c4c" stroke-width="1.4"/><line x1="828.6" y1="505.4" x2="828.6" y2="768.4" stroke="#505050" stroke-width="1.4"/><polyline points="30,572 32,573.67 35,567.33 37.67,573 40,578.67 43,585 45,572 47.67,557.67 49.33,560.67 51.67,567.67 54,579.33 55.67,567.33 65,567 67,563.67 68.67,567 70,562.67 71.33,567 72.33,558 73.67,567 75,558.33 76,562.67 77.33,558.33 78.67,562.67 79.67,558.33 81.67,567 83,567 85,554 86.67,545.33 88.33,549.33 90,541 91.33,545 92.67,535.67 94,536.67 95.33,541 96.67,545 98,538.33 99.33,535.67 100.67,543.33 102,540 103.33,550 104.67,563.33 106,585 108,576.67 109.33,572 110.67,574.33 113.33,570 115.33,563.33 117.33,562.67 119.33,558.33 121,561.33 122.33,558.33 124,562.67 126.67,567 128.67,563 133.33,563 135.33,567 137,563 139,567 140.67,563.67 142.67,567 144.33,563.67 146.33,567 148.33,563.67 150,567 151.67,563 154,568.33 155.67,571.33 157,575 158.33,568.33 160.33,563.67 161.67,568.33 163,563 164.33,570 166.67,563.33 168.33,557.67 170,560 171.67,562.67 174,557.67 176.67,562.67 179,562.67 180,563.67 181.67,567 183.33,563.67 186.67,562.67 188.67,558.33 190.33,562.67 192,557.67 194,562.67 195.33,568.33 196.67,575 198,568.33 199.67,571.33 201,567 202.33,575 203.67,568.33 205.33,567 206.67,570 208.33,567 209.67,570 211,567 212.67,570 215,571.33 216.67,573.33 218.33,571.33 220,579.33 221.33,571.33 223,575.67 224.33,579.33 226.33,575.67 228.33,575 230,579.33 231.67,571.33 233,567 234,573.33 235,567 236.33,573.33 237.67,576.67 239.33,584.67 240.67,579.33 243.33,579.33 244,600 245.33,603.33 246,629.17 250.67,630 251.33,651.67 252,680 253.33,694.67 257,694.67 258.67,690 261.33,685.83 263.67,683.67 265.33,676.67 267.33,680.83 268.33,680 269.67,689.17 271.33,680 272.33,663.33 273.67,651.67 276.67,645 280.33,636.67 280.67,635 281.67,621.67 282.67,619.67 284,623.33 285.67,619.67 287,618.33 288.33,603.33 289.33,593.33 290.67,596.67 292,591.67 293.33,583.33 295,575 296.67,584.67 298.67,580 300.33,584.67 302.33,588.33 303.67,581.67 305.33,583.33 307,576.67 308.33,575.67 309.33,584.67 311,570 312.67,565 315,560 317.33,554 319.33,550 321,545 322,549.33 323.33,545.33 340,545.33 1472,545.2" fill="none" stroke="#ff6464" stroke-width="1.4" stroke-linejoin="round"/><polyline points="30,619.67 32,619.67 33.33,629.17 35,624.17 36.67,628.5 38,623.33 40,628.5 44.67,628.5 45.67,615.33 47,606.67 48.67,611 51.67,611.67 52.67,620 54,629.17 55.33,613.33 56.67,615.33 58,611 59.33,615.33 60.67,611 62,615.33 63.33,611 64.67,615.33 66,611 67.33,615.33 68.67,611 70,615.33 72,601.67 73.67,611 76,611 77.67,615.33 79.67,613.33 81.33,615.33 83.67,615.33 85,603.33 86,593.33 91,593 92.67,584.67 94,589 95.33,584.67 96.67,593.33 98.67,589 100.67,584.67 102,593.33 103.67,595.83 105,610 106,633 107.33,624.17 108.33,615 109.67,623.33 110.67,615 112,621.67 113.33,613.33 114.67,623.33 116,606.67 117.33,618.33 118.67,615.33 123.67,615.33 125.33,606.67 126.67,615.33 128.67,606.67 130,615.33 132,606.67 134,615.33 136,619.67 138,615.33 140,611 141.67,615.33 143.67,611 145.67,618.33 148,619.67 150,615.33 152,606.67 154,611 155.67,615.33 157.33,619.67 159,611 161,611 162.67,619.67 164.33,615.33 166.33,611 168.33,601.67 169.33,615.33 170.67,606.67 172,615.33 173.33,606.67 174.67,615.33 176,611 177.67,615.33 179.33,611 180,619.67 180,619.67 183.33,619.67 184.67,615.33 186,618.33 187.33,611 188.67,613.33 190,615.33 194,615.33 195.33,611 196.67,618.33 198.67,619.67 201.67,619.67 203.67,623.33 205,619.67 206.67,623.33 210,623.33 211.67,619.67 213.33,624.17 214.67,628.5 216,623.33 225.33,623.33 227,628.5 228.33,633 229.67,624.17 231.33,619.67 232.67,624.17 233.67,619.67 235,623.33 236.33,619.67 237.67,629.17 238.67,633 240,628.5 241.33,633 242.33,629.17 243,630 243.33,630 244.33,655 245,676.67 248.33,678.33 250,681.67 250.67,696.67 251.67,728.33 253.33,730 254.67,746.67 256,743.33 257.33,746.67 258.67,736.67 260,733.33 261.33,735 262.67,738.33 264,733.33 265.67,725 267,730 268.33,738.33 269.33,734.17 271,733.33 272.33,725 273.33,708.33 274,696.67 275.33,698.33 276.67,695 278.33,691.67 279.33,689.17 280.33,695 281,686.67 282,673.33 284,676.67 286,673.33 287.33,668.33 288.33,653.33 289.33,643.33 290.67,645 292.67,638.33 294,631.67 295,629.17 298.33,629.17 300,635 302,637.5 304.17,634.17 306.67,632 308.67,629.17 310.67,628.5 312.33,615.33 315,610 317.67,605 319.33,597.67 320.33,593.33 321.67,597 340,597.33 1472,597.3" fill="none" stroke="#0a64ff" stroke-width="1.4" stroke-linejoin="round"/><text x="33.5" y="519.7" font-size="12.8" fill="#000" textLength="54.5" lengthAdjust="spacingAndGlyphs" class="lat">USDJPYs</text><path d="M29.9 505.4H1472.3V768.4H29.9z" fill="none" stroke="#000" stroke-width="1.5"/><path d="M30.4 768.4v4.3M74.35 768.4v4.3M118.3 768.4v4.3M162.25 768.4v4.3M206.2 768.4v4.3M250.15 768.4v4.3M294.1 768.4v4.3M338.05 768.4v4.3M382 768.4v4.3M425.95 768.4v4.3M469.9 768.4v4.3M513.85 768.4v4.3M557.8 768.4v4.3M601.75 768.4v4.3M645.7 768.4v4.3M689.65 768.4v4.3M733.6 768.4v4.3M777.55 768.4v4.3M821.5 768.4v4.3M865.45 768.4v4.3M909.4 768.4v4.3M953.35 768.4v4.3M997.3 768.4v4.3M1041.25 768.4v4.3M1085.2 768.4v4.3M1129.15 768.4v4.3M1173.1 768.4v4.3M1217.05 768.4v4.3M1261 768.4v4.3M1304.95 768.4v4.3M1348.9 768.4v4.3M1392.85 768.4v4.3M1436.8 768.4v4.3" stroke="#000" stroke-width="1.4" fill="none"/><text x="30.6" y="786.5" font-size="12.8" fill="#000" textLength="63" lengthAdjust="spacingAndGlyphs" class="lat">2026.01.05</text><text x="118.1" y="786.5" font-size="12.8" fill="#000" textLength="31.5" lengthAdjust="spacingAndGlyphs" class="lat">09:23</text><text x="162.05" y="786.5" font-size="12.8" fill="#000" textLength="31.5" lengthAdjust="spacingAndGlyphs" class="lat">09:24</text><text x="206" y="786.5" font-size="12.8" fill="#000" textLength="31.5" lengthAdjust="spacingAndGlyphs" class="lat">09:25</text><text x="249.95" y="786.5" font-size="12.8" fill="#000" textLength="31.5" lengthAdjust="spacingAndGlyphs" class="lat">09:25</text><text x="293.9" y="786.5" font-size="12.8" fill="#000" textLength="31.5" lengthAdjust="spacingAndGlyphs" class="lat">09:25</text><line x1="1472.3" y1="549.3" x2="1474.6" y2="549.3" stroke="#000" stroke-width="1.5"/><text x="1480.3" y="554" font-size="12.8" fill="#000" textLength="44.5" lengthAdjust="spacingAndGlyphs" class="lat">157.015</text><line x1="1472.3" y1="593.3" x2="1474.6" y2="593.3" stroke="#000" stroke-width="1.5"/><text x="1480.3" y="598" font-size="12.8" fill="#000" textLength="44.5" lengthAdjust="spacingAndGlyphs" class="lat">157.005</text><line x1="1472.3" y1="637.3" x2="1474.6" y2="637.3" stroke="#000" stroke-width="1.5"/><text x="1480.3" y="642" font-size="12.8" fill="#000" textLength="44.5" lengthAdjust="spacingAndGlyphs" class="lat">156.995</text><line x1="1472.3" y1="681.3" x2="1474.6" y2="681.3" stroke="#000" stroke-width="1.5"/><text x="1480.3" y="686" font-size="12.8" fill="#000" textLength="44.5" lengthAdjust="spacingAndGlyphs" class="lat">156.985</text><line x1="1472.3" y1="725.3" x2="1474.6" y2="725.3" stroke="#000" stroke-width="1.5"/><text x="1480.3" y="730" font-size="12.8" fill="#000" textLength="44.5" lengthAdjust="spacingAndGlyphs" class="lat">156.975</text><rect x="1474.3" y="539" width="56" height="13.6" fill="#ff6464"/><text x="1481" y="550.6" font-size="12.8" fill="#fff" textLength="44.5" lengthAdjust="spacingAndGlyphs" class="lat">157.016</text><rect x="1474.3" y="530.8" width="56" height="14.5" fill="#5f5f5f"/><text x="1481" y="542.7" font-size="12.8" fill="#fff" textLength="44.5" lengthAdjust="spacingAndGlyphs" class="lat">157.018</text><rect x="1474.3" y="590.3" width="56" height="14.5" fill="#0a64ff"/><text x="1481" y="602.2" font-size="12.8" fill="#fff" textLength="44.5" lengthAdjust="spacingAndGlyphs" class="lat">157.004</text><rect x="25.2" y="797.6" width="1536" height="45" fill="#f0f0f0"/><rect x="0" y="831" width="26" height="10" fill="#f0f0f0"/><rect x="266.4" y="797" width="71" height="26.4" fill="#fff"/><path d="M25.2 797.6H266.4V823.4H337.4V797.6H1536" fill="none" stroke="#000" stroke-width="1.5"/><path d="M267.6 824.7H338.7V799" fill="none" stroke="#7a7a7a" stroke-width="1.2"/><text x="47.5" y="816.5" font-size="16.4" fill="#868686" textLength="32" lengthAdjust="spacingAndGlyphs">銘柄</text><line x1="94.2" y1="802" x2="94.2" y2="822" stroke="#6a6a6a" stroke-width="1.4"/><text x="108" y="816.5" font-size="16.4" fill="#868686" textLength="31.5" lengthAdjust="spacingAndGlyphs">詳細</text><line x1="154.6" y1="802" x2="154.6" y2="822" stroke="#6a6a6a" stroke-width="1.4"/><text x="167" y="816.5" font-size="16.4" fill="#868686" textLength="85" lengthAdjust="spacingAndGlyphs">プライスボード</text><text x="279.5" y="816.5" font-size="16.4" fill="#000" textLength="44" lengthAdjust="spacingAndGlyphs">ティック</text></svg></div>
<svg id="frame" width="1536" height="840" viewBox="0 0 1536 840" style="position:absolute;left:0;top:0;pointer-events:none"><path fill-rule="evenodd" fill="#03318a" d="M18 0h1500a18 18 0 0 1 18 18v804a18 18 0 0 1 -18 18h-1500a18 18 0 0 1 -18 -18v-804a18 18 0 0 1 18 -18zM21.7 1.7h1492.6a20 20 0 0 1 20 20v796.6a20 20 0 0 1 -20 20h-1492.6a20 20 0 0 1 -20 -20v-796.6a20 20 0 0 1 20 -20z"/></svg></div></body></html>
